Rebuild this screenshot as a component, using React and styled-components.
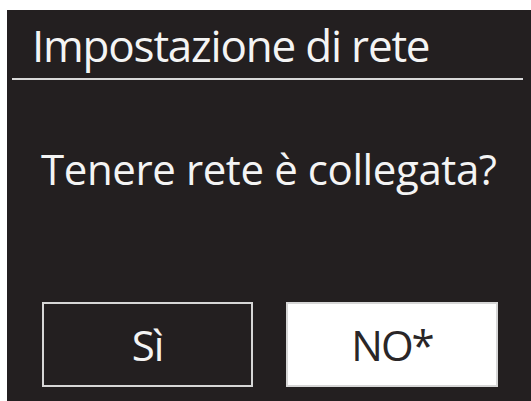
import React from "react";
import styled, { createGlobalStyle } from "styled-components";

const Global = createGlobalStyle`
  html, body { margin: 0; padding: 0; background: #ffffff; }
  body { width: 531px; height: 401px; overflow: hidden; }
`;

const Screen = styled.div`
  margin: 10px 0 0 7px;
  width: 524px;
  height: 391px;
  background: #231f20;
  display: flex;
  flex-direction: column;
  font-family: "Open Sans", "Noto Sans", sans-serif;
  color: #f4f4f4;
`;

const Header = styled.div`
  margin: 0 8px 0 5px;
  height: 70px;
  border-bottom: 2px solid #d9d9d9;
  display: flex;
  align-items: flex-end;
  padding-left: 20px;
  box-sizing: border-box;
`;

const Title = styled.h1`
  margin: 0 0 5px 0;
  font-weight: 400;
  font-size: 44px;
  line-height: 56px;
  letter-spacing: -1.2px;
`;

const Message = styled.p`
  margin: 64px 0 0 0;
  padding-left: 34px;
  font-size: 42px;
  line-height: 50px;
  letter-spacing: -0.4px;
`;

const Buttons = styled.div`
  margin-top: auto;
  margin-bottom: 14px;
  display: flex;
  gap: 33px;
  padding-left: 35px;
`;

const Choice = styled.div`
  box-sizing: border-box;
  width: ${(p) => p.$w}px;
  height: 85px;
  display: flex;
  align-items: center;
  justify-content: center;
  font-size: 42px;
  letter-spacing: ${(p) => (p.$selected ? "-2px" : "-1px")};
  border: 2px solid #d6d6d6;
  background: ${(p) => (p.$selected ? "#ffffff" : "transparent")};
  color: ${(p) => (p.$selected ? "#2a2627" : "#f4f4f4")};
`;

export default function App() {
  return (
    <>
      <Global />
      <Screen>
        <Header>
          <Title>Impostazione di rete</Title>
        </Header>
        <Message>Tenere rete è collegata?</Message>
        <Buttons>
          <Choice $w={211}>Sì</Choice>
          <Choice $w={212} $selected>NO*</Choice>
        </Buttons>
      </Screen>
    </>
  );
}
